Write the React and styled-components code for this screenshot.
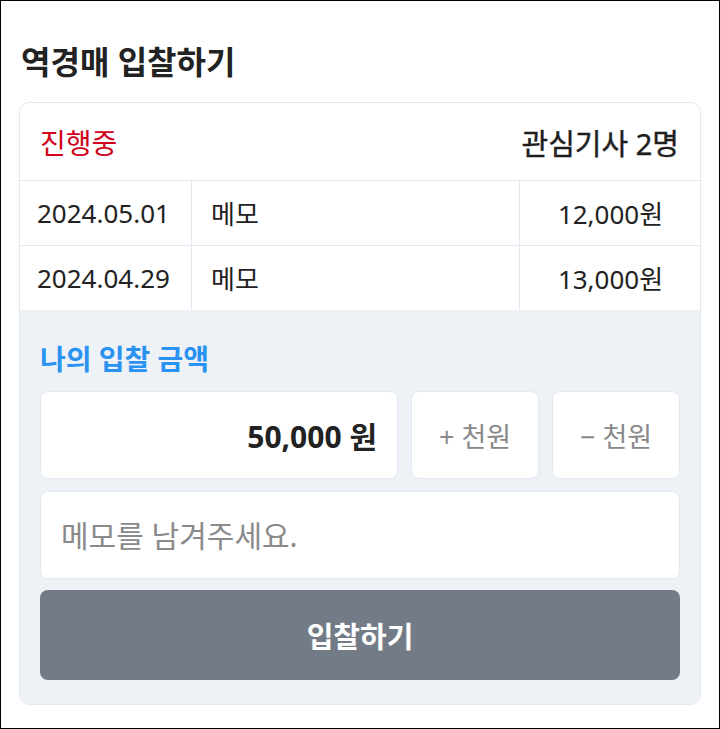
import React from "react";
import styled, { createGlobalStyle } from "styled-components";

const Global = createGlobalStyle`
  html, body { margin: 0; padding: 0; background: #fff; }
  body { font-family: "Noto Sans", "Noto Sans CJK KR", sans-serif; color: #222; }
  * { box-sizing: border-box; }
`;

const Frame = styled.div`
  width: 720px;
  height: 729px;
  border: 1px solid #000;
  padding: 41px 18px 0;
`;

const Title = styled.h1`
  margin: 0 0 20px;
  padding-left: 2px;
  font-size: 32px;
  line-height: 40px;
  font-weight: 700;
  color: #222;
`;

const Card = styled.div`
  border: 1px solid #e1e9f2;
  border-radius: 10px;
  overflow: hidden;
  background: #fff;
`;

const Header = styled.div`
  height: 77px;
  display: flex;
  align-items: center;
  justify-content: space-between;
  padding: 0 21px 0 20px;
`;

const Status = styled.span`
  color: #d0021b;
  font-size: 28px;
`;

const Watchers = styled.span`
  color: #1e1e1e;
  font-size: 29px;
  font-weight: 400;
  -webkit-text-stroke: 0.4px #1e1e1e;
`;

const Row = styled.div`
  display: grid;
  grid-template-columns: 171px 328px 1fr;
  height: 65px;
  border-top: 1px solid #e1e9f2;
`;

const Cell = styled.div`
  display: flex;
  align-items: center;
  justify-content: ${(p) => (p.$center ? "center" : "flex-start")};
  padding: 0 18px 0 ${(p) => (p.$first ? "17px" : "19px")};
  font-size: 26px;
  color: #222;
  border-left: ${(p) => (p.$first ? "none" : "1px solid #e1e9f2")};
`;

const BidSection = styled.div`
  background: #eef2f6;
  padding: 33px 20px 24px;
  display: flex;
  flex-direction: column;
`;

const Label = styled.div`
  color: #2a93f2;
  font-weight: 700;
  font-size: 28px;
  line-height: 32px;
  margin-bottom: 16px;
`;

const AmountRow = styled.div`
  display: grid;
  grid-template-columns: 1fr 128px 128px;
  gap: 13px;
  margin-bottom: 12px;
`;

const Box = styled.div`
  height: 88px;
  background: #fff;
  border: 1px solid #e1e9f2;
  border-radius: 8px;
  display: flex;
  align-items: center;
`;

const Amount = styled(Box)`
  justify-content: flex-end;
  padding-right: 20px;
  font-size: 30px;
  font-weight: 700;
  color: #222;
`;

const StepButton = styled(Box).attrs({ as: "button" })`
  justify-content: center;
  font-family: inherit;
  font-size: 27px;
  color: #888;
  cursor: pointer;
  padding: 0;
`;

const Memo = styled(Box).attrs({ as: "input" })`
  width: 100%;
  padding: 0 20px;
  font-family: inherit;
  font-size: 30px;
  color: #222;
  outline: none;
  margin-bottom: 11px;
  &::placeholder { color: #8a8a8a; }
`;

const Submit = styled.button`
  height: 90px;
  border: none;
  border-radius: 8px;
  background: #737c86;
  color: #fff;
  font-family: inherit;
  font-size: 29px;
  font-weight: 700;
  cursor: pointer;
`;

const bids = [
  { date: "2024.05.01", memo: "메모", price: "12,000원" },
  { date: "2024.04.29", memo: "메모", price: "13,000원" },
];

export default function App() {
  return (
    <>
      <Global />
      <Frame>
        <Title>역경매 입찰하기</Title>
        <Card>
          <Header>
            <Status>진행중</Status>
            <Watchers>관심기사 2명</Watchers>
          </Header>
          {bids.map((b) => (
            <Row key={b.date}>
              <Cell $first>{b.date}</Cell>
              <Cell>{b.memo}</Cell>
              <Cell $center>{b.price}</Cell>
            </Row>
          ))}
          <BidSection>
            <Label>나의 입찰 금액</Label>
            <AmountRow>
              <Amount>50,000 원</Amount>
              <StepButton>+ 천원</StepButton>
              <StepButton>− 천원</StepButton>
            </AmountRow>
            <Memo placeholder="메모를 남겨주세요." />
            <Submit>입찰하기</Submit>
          </BidSection>
        </Card>
      </Frame>
    </>
  );
}
